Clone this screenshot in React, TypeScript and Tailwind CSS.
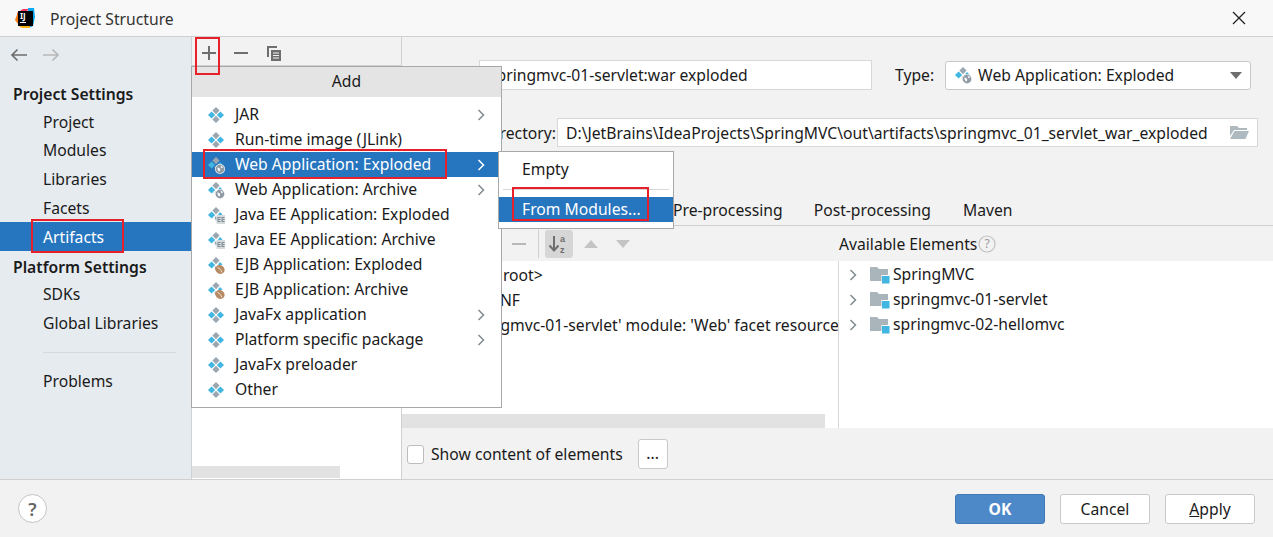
import React from "react";

const Art = ({ kind }: { kind?: "web" | "ee" | "ejb" }) => (
  <svg width="18" height="18" viewBox="0 0 18 18" className="shrink-0">
    <path d="M9 1l3.600 3.600L9 8.200 5.400 4.600z" fill="#9aa7b0" />
    <path d="M4.600 5.400L8.200 9 4.600 12.600 1 9z" fill="#40b6e0" />
    {kind ? null : <path d="M13.400 5.400L17 9l-3.600 3.600L9.800 9z" fill="#40b6e0" />}
    {kind ? null : <path d="M9 9.800l3.600 3.600L9 17l-3.600-3.600z" fill="#9aa7b0" />}
    {kind ? <path d="M13 6l2.500 2.500L13 9.500 11 8.500z" fill="#40b6e0" /> : null}
    {kind ? <path d="M7.500 11.500L9 10l1 3-1 2z" fill="#9aa7b0" /> : null}
    {kind === "web" ? (
      <g>
        <circle cx="13" cy="13" r="5" fill="#fff" />
        <circle cx="13" cy="13" r="4.400" fill="#8f9ba5" />
        <path d="M10.300 11.500l2 .5 1 1.500-1 2.300-1.500-1.800zM13.500 9.500l2.800 1.800-1.800 1z" fill="#fff" />
      </g>
    ) : null}
    {kind === "ee" ? (
      <g>
        <rect x="9.500" y="9" width="8.500" height="9" fill="#d5dadd" />
        <path d="M10.500 11h3v1h-2v1h2v1h-2v1h2v1h-3zM14.500 11h3v1h-2v1h2v1h-2v1h2v1h-3z" fill="#7f8b95" />
      </g>
    ) : null}
    {kind === "ejb" ? (
      <g>
        <ellipse cx="13" cy="13.500" rx="4.800" ry="4.200" fill="#b78a64" transform="rotate(35 13 13.500)" />
        <path d="M10.500 11.500c2 .5 3.500 2.500 4.500 5" stroke="#f0e4d8" strokeWidth="1" fill="none" />
      </g>
    ) : null}
  </svg>
);

const Chevron = ({ color = "#7f8b91" }: { color?: string }) => (
  <svg width="10" height="14" viewBox="0 0 10 14" className="shrink-0">
    <path d="M2.500 2l5 5-5 5" stroke={color} strokeWidth="1.500" fill="none" />
  </svg>
);

const FolderMod = () => (
  <svg width="20" height="18" viewBox="0 0 20 18" className="shrink-0">
    <path d="M0 1h7l2 2h9v12H0z" fill="#a9b4bb" />
    <rect x="11.500" y="9" width="8" height="8" fill="#fff" />
    <rect x="12" y="10" width="7.500" height="7.500" fill="#40b6e0" />
  </svg>
);

const Tree = ({ text }: { text: string }) => (
  <div className="flex h-[25px] items-center">
    <span className="ml-[9px] mr-[12px] flex"><Chevron /></span>
    <FolderMod />
    <span className="ml-[3px] pb-[1px]">{text}</span>
  </div>
);

const items: { label: string; kind?: "web" | "ee" | "ejb"; sub?: boolean; active?: boolean }[] = [
  { label: "JAR", sub: true },
  { label: "Run-time image (JLink)" },
  { label: "Web Application: Exploded", kind: "web", sub: true, active: true },
  { label: "Web Application: Archive", kind: "web", sub: true },
  { label: "Java EE Application: Exploded", kind: "ee" },
  { label: "Java EE Application: Archive", kind: "ee" },
  { label: "EJB Application: Exploded", kind: "ejb" },
  { label: "EJB Application: Archive", kind: "ejb" },
  { label: "JavaFx application", sub: true },
  { label: "Platform specific package", sub: true },
  { label: "JavaFx preloader" },
  { label: "Other" },
];

const SideItem = ({ text, h = "h-[29px]" }: { text: string; h?: string }) => (
  <div className={`${h} flex items-center pl-[43px]`}>{text}</div>
);

const Red = ({ className }: { className: string }) => (
  <div className={`absolute border-2 border-[#e8202a] ${className}`} />
);

export default function App() {
  return (
    <div className="relative flex h-[537px] w-[1273px] flex-col overflow-hidden bg-[#f2f2f2] text-[15.7px] leading-[20px] text-[#1a1a1a] [font-family:'Noto_Sans',sans-serif]">
      {/* Title bar */}
      <div className="flex h-[37px] shrink-0 items-center border-b border-[#d0d0d0] bg-[#f8f8f8] pl-[15px] pr-[27px]">
        <div className="relative h-[21px] w-[20px] shrink-0">
          <svg width="20" height="21" viewBox="0 0 20 21" className="absolute inset-0">
            <path d="M2 5L8 1h6L2 12z" fill="#fe315d" />
            <path d="M0 12l3-8 3 16z" fill="#f97a12" />
            <path d="M13 0h6l1 9-2 9-4 2z" fill="#07a8f2" />
            <path d="M3 17h12v3H7z" fill="#fdb60d" />
          </svg>
          <div className="absolute left-[3px] top-[3px] flex h-[15px] w-[15px] flex-col bg-black pl-[2px] text-[8px] font-bold leading-[9px] text-white">
            IJ
            <div className="mt-[2px] h-[1px] w-[6px] bg-white" />
          </div>
        </div>
        <span className="ml-[15px] pt-[1px] text-[#333]">Project Structure</span>
        <svg width="14" height="14" viewBox="0 0 14 14" className="ml-auto">
          <path d="M1 1l12 12M13 1L1 13" stroke="#222" strokeWidth="1.300" />
        </svg>
      </div>

      {/* Body */}
      <div className="flex h-[442px] shrink-0">
        {/* Sidebar */}
        <div className="flex w-[192px] shrink-0 flex-col border-r border-[#cfd3d6] bg-[#e6ebf0]">
          <div className="flex h-[36px] items-center gap-[16px] pb-[1px] pl-[10px]">
            <svg width="17" height="14" viewBox="0 0 17 14">
              <path d="M17 7H2M7.500 1.500L2 7l5.500 5.500" stroke="#6e6e6e" strokeWidth="1.700" fill="none" />
            </svg>
            <svg width="17" height="14" viewBox="0 0 17 14">
              <path d="M0 7h15M9.500 1.500L15 7l-5.500 5.500" stroke="#b8b8b8" strokeWidth="1.700" fill="none" />
            </svg>
          </div>
          <div className="flex h-[33px] items-end pb-[2px] pl-[13px] font-semibold">Project Settings</div>
          <div className="pt-[2px]">
            <SideItem text="Project" h="h-[28px]" />
            <SideItem text="Modules" h="h-[28px]" />
            <SideItem text="Libraries" />
            <SideItem text="Facets" />
          </div>
          <div className="flex h-[29px] items-center bg-[#2675bf] pl-[43px] text-white">Artifacts</div>
          <div className="flex h-[32px] items-center pl-[13px] font-semibold">Platform Settings</div>
          <SideItem text="SDKs" h="h-[22px]" />
          <SideItem text="Global Libraries" h="h-[35px]" />
          <div className="my-[12px] ml-[43px] mr-[15px] h-px bg-[#d5d9dd]" />
          <SideItem text="Problems" h="h-[31px]" />
        </div>

        {/* Artifact list */}
        <div className="flex w-[210px] shrink-0 flex-col border-r border-[#d0d0d0] bg-white">
          <div className="flex h-[29px] shrink-0 items-center gap-[18px] border-b border-[#d0d0d0] bg-[#f2f2f2] pl-[10px] pt-[3px]">
            <svg width="14" height="14" viewBox="0 0 14 14">
              <path d="M7 0v14M0 7h14" stroke="#6e6e6e" strokeWidth="2" />
            </svg>
            <svg width="14" height="14" viewBox="0 0 14 14">
              <path d="M0 7h14" stroke="#6e6e6e" strokeWidth="2" />
            </svg>
            <svg width="16" height="16" viewBox="0 0 16 16">
              <path d="M1 1h10v2H3v9H1z" fill="#6e6e6e" />
              <rect x="5" y="5" width="10" height="11" fill="#6e6e6e" />
              <path d="M7 8h6M7 10.500h6M7 13h6" stroke="#f2f2f2" strokeWidth="1" />
            </svg>
          </div>
          <div className="flex-1" />
          <div className="mb-[1px] h-[12px] w-[148px] bg-[#e2e2e2]" />
        </div>

        {/* Detail */}
        <div className="flex min-w-0 flex-1 flex-col">
          <div className="flex h-[23px] shrink-0" />
          <div className="flex h-[30px] shrink-0 items-center">
            <span className="ml-[22px] w-[55px]">Name:</span>
            <div className="flex h-[30px] w-[393px] items-center border border-[#d8d8d8] bg-white pl-[9px]">springmvc-01-servlet:war exploded</div>
            <span className="ml-[23px]">Type:</span>
            <div className="ml-[11px] flex h-[29px] w-[306px] items-center rounded-[3px] border border-[#c9c9c9] bg-white pl-[8px] pr-[8px]">
              <Art kind="web" />
              <span className="ml-[6px]">Web Application: Exploded</span>
              <svg width="12" height="7" viewBox="0 0 12 7" className="ml-auto">
                <path d="M0 0h12L6 7z" fill="#6e6e6e" />
              </svg>
            </div>
          </div>
          <div className="flex h-[28px] shrink-0" />
          <div className="flex h-[29px] shrink-0 items-center">
            <span className="ml-[10px] w-[144px] whitespace-nowrap text-right">Output directory:</span>
            <div className="ml-[1px] flex h-[29px] w-[701px] items-center border border-[#d8d8d8] bg-white pl-[8px] pr-[8px]">
              <span className="whitespace-nowrap">D:\JetBrains\IdeaProjects\SpringMVC\out\artifacts\springmvc_01_servlet_war_exploded</span>
              <svg width="19" height="15" viewBox="0 0 19 15" className="ml-auto">
                <path d="M0 1h7l2 2h8v2H4L0 11z" fill="#aeb9c0" />
                <path d="M4.500 6H19l-3.500 8H0z" fill="#aeb9c0" />
              </svg>
            </div>
          </div>
          <div className="h-[47px] shrink-0" />
          <div className="flex h-[32px] shrink-0 items-center border-b border-[#d0d0d0] pl-[271px]">
            <span>Pre-processing</span>
            <span className="ml-[31px]">Post-processing</span>
            <span className="ml-[32px]">Maven</span>
          </div>
          <div className="flex min-h-0 flex-1">
            {/* Left tree */}
            <div className="flex w-[436px] shrink-0 flex-col overflow-hidden">
              <div className="flex h-[35px] shrink-0 items-center pl-[110px]">
                <svg width="14" height="2" viewBox="0 0 14 2"><path d="M0 1h14" stroke="#b8b8b8" strokeWidth="2" /></svg>
                <div className="ml-[12px] h-[28px] w-px bg-[#d0d0d0]" />
                <div className="ml-[6px] flex h-[28px] w-[28px] items-center justify-center rounded-[3px] bg-[#d6d6d6]">
                  <svg width="22" height="22" viewBox="0 0 22 22">
                    <path d="M6 3v14M1.500 12.500L6 17.500l4.500-5" stroke="#6e6e6e" strokeWidth="2" fill="none" />
                    <text x="12" y="9" fontSize="9" fontWeight="700" fill="#6e6e6e" fontFamily="'Liberation Sans', sans-serif">a</text>
                    <text x="12" y="20" fontSize="9" fontWeight="700" fill="#6e6e6e" fontFamily="'Liberation Sans', sans-serif">z</text>
                  </svg>
                </div>
                <svg width="14" height="8" viewBox="0 0 14 8" className="ml-[11px]"><path d="M7 0l7 8H0z" fill="#c4c4c4" /></svg>
                <svg width="14" height="8" viewBox="0 0 14 8" className="ml-[18px]"><path d="M0 0h14L7 8z" fill="#c4c4c4" /></svg>
              </div>
              <div className="relative flex h-[167px] shrink-0 flex-col overflow-hidden whitespace-nowrap bg-white pt-[1px]">
                <div className="flex h-[25px] shrink-0 items-center pl-[38px]">&lt;output root&gt;</div>
                <div className="flex h-[25px] shrink-0 items-center pl-[54px]">WEB-INF</div>
                <div className="flex h-[25px] shrink-0 items-center pl-[58px]">'springmvc-01-servlet' module: 'Web' facet resource</div>
                <div className="absolute bottom-0 left-0 h-[14px] w-[423px] bg-[#e2e2e2]" />
              </div>
              <div className="flex flex-1 items-center pl-[5px] pt-[1px]">
                <div className="h-[19px] w-[17px] rounded-[3px] border border-[#bdbdbd] bg-white" />
                <span className="ml-[7px]">Show content of elements</span>
                <div className="ml-[15px] flex h-[30px] w-[30px] items-center justify-center rounded-[3px] border border-[#c9c9c9] bg-white pb-[3px]">...</div>
              </div>
            </div>
            {/* Right tree */}
            <div className="flex min-w-0 flex-1 flex-col">
              <div className="flex h-[35px] shrink-0 items-center pl-[1px]">
                Available Elements
                <svg width="18" height="18" viewBox="0 0 18 18" className="ml-[1px]">
                  <circle cx="9" cy="9" r="8" stroke="#c0c0c0" strokeWidth="1.200" fill="none" />
                  <text x="9" y="13" textAnchor="middle" fontSize="12" fill="#999">?</text>
                </svg>
              </div>
              <div className="h-[167px] shrink-0 border-l border-[#d8d8d8] bg-white pt-[1px]">
                <Tree text="SpringMVC" />
                <Tree text="springmvc-01-servlet" />
                <Tree text="springmvc-02-hellomvc" />
              </div>
            </div>
          </div>
        </div>
      </div>

      {/* Footer */}
      <div className="flex min-h-0 flex-1 items-center border-t border-[#d0d0d0] pl-[18px] pr-[18px]">
        <div className="flex h-[29px] w-[29px] items-center justify-center rounded-full border border-[#c4c4c4] bg-white text-[18px] font-semibold text-[#666]">?</div>
        <div className="ml-auto flex h-[30px] w-[90px] items-center justify-center rounded-[3px] border border-[#4279b4] bg-[#4d88c9] font-bold text-white">OK</div>
        <div className="ml-[15px] flex h-[30px] w-[90px] items-center justify-center rounded-[3px] border border-[#c9c9c9] bg-white">Cancel</div>
        <div className="ml-[15px] flex h-[30px] w-[90px] items-center justify-center rounded-[3px] border border-[#c9c9c9] bg-white"><span><span className="underline">A</span>pply</span></div>
      </div>

      {/* Add popup */}
      <div className="absolute left-[191px] top-[66px] flex h-[342px] w-[311px] flex-col border border-[#a8a8a8] bg-white">
        <div className="flex h-[30px] shrink-0 items-center justify-center bg-[#e4e4e4] pb-[2px]">Add</div>
        <div className="pt-[5px]">
          {items.map((it) => (
            <div key={it.label} className={`flex h-[25px] items-center pl-[15px] pr-[15px] ${it.active ? "bg-[#2675bf] text-white" : ""}`}>
              <Art kind={it.kind} />
              <span className="ml-[10px] pb-[2px]">{it.label}</span>
              {it.sub ? <span className="ml-auto flex"><Chevron color={it.active ? "#ffffff" : "#7f8b91"} /></span> : null}
            </div>
          ))}
        </div>
      </div>

      {/* Sub popup */}
      <div className="absolute left-[498px] top-[151px] flex h-[78px] w-[176px] flex-col border border-[#a8a8a8] bg-white">
        <div className="flex h-[36px] items-center pb-[2px] pl-[23px]">Empty</div>
        <div className="mx-[4px] mt-[1px] h-px bg-[#d8d8d8]" />
        <div className="mt-[7px] flex h-[25px] items-center bg-[#2675bf] pb-[2px] pl-[23px] text-white">From Modules...</div>
      </div>

      <Red className="left-[195px] top-[37px] h-[38px] w-[25px]" />
      <Red className="left-[203px] top-[149px] h-[30px] w-[244px]" />
      <Red className="left-[31px] top-[219px] h-[34px] w-[93px]" />
      <Red className="left-[512px] top-[187px] h-[34px] w-[137px]" />
    </div>
  );
}
